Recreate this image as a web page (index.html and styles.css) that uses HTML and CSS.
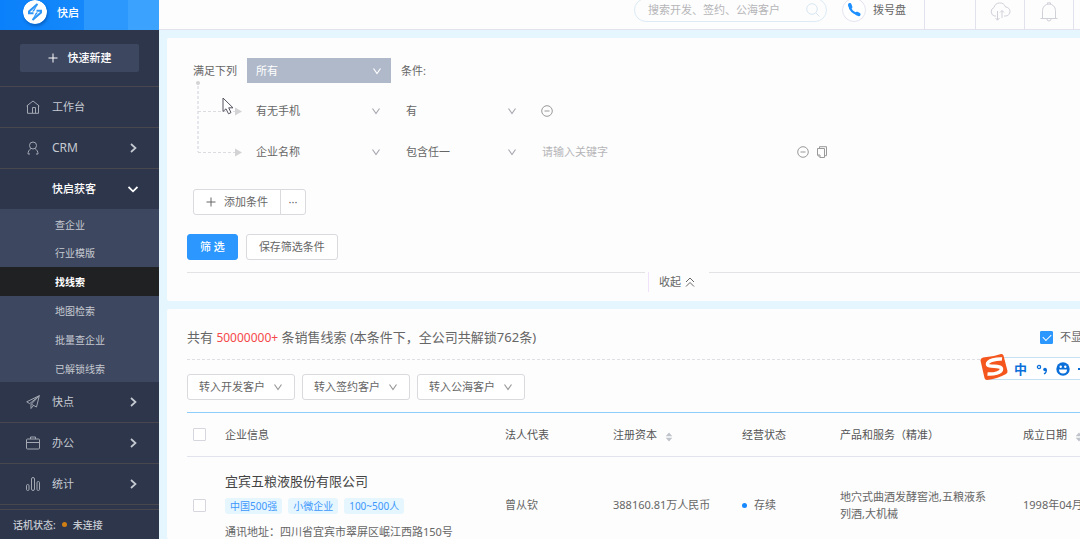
FILE: index.html
```html
<!DOCTYPE html>
<html lang="zh-CN">
<head>
<meta charset="utf-8">
<title>快启</title>
<link rel="stylesheet" href="styles.css">
</head>
<body>
<svg class="defs" aria-hidden="true">
  <symbol id="down" viewBox="0 0 10 10"><path d="M1.500 2.500 5 7.500 8.500 2.500" fill="none" stroke="currentColor" stroke-width="1.200"/></symbol>
  <symbol id="right" viewBox="0 0 10 10"><path d="M3 1 7.500 5 3 9" fill="none" stroke="currentColor" stroke-width="1.700"/></symbol>
  <symbol id="plus" viewBox="0 0 10 10"><path d="M5 .5v9M.5 5h9" fill="none" stroke="currentColor"/></symbol>
  <symbol id="minus" viewBox="0 0 12 12"><circle cx="6" cy="6" r="5.300" fill="none" stroke="currentColor"/><path d="M3.500 6h5" stroke="currentColor"/></symbol>
  <symbol id="sort" viewBox="0 0 8 10"><path d="M4 .5 7.300 4.300H.7zM4 9.500.7 5.700h6.600z" fill="currentColor"/></symbol>
</svg>
<div class="app">
  <aside class="sidebar">
    <div class="brand">
      <svg class="logo" viewBox="0 0 24 24"><circle cx="12" cy="12" r="12" fill="#fff"/><path d="M14.500 4 6 11.500v1.700h4.500M9.500 20 18 12.500v-1.700h-4.500" fill="none" stroke="#2c95f5" stroke-width="2"/><path d="M15.500 3 11 11.500h-2zM8.500 21l4.500-8.500h2z" fill="#2c95f5"/></svg>
      <span>快启</span>
    </div>
    <div class="create"><button class="create-btn"><svg class="i10"><use href="#plus"/></svg>快速新建</button></div>
    <nav class="menu">
      <a class="item" href="#"><svg class="i14" viewBox="0 0 14 14"><path d="M.7 6 7 1l6.300 5M1.500 5v8.300h11V5M6.500 13V7.500H9.500V13" fill="none" stroke="currentColor"/></svg><span>工作台</span></a>
      <a class="item" href="#"><svg class="i14" viewBox="0 0 14 14"><circle cx="7" cy="4.500" r="3.500" fill="none" stroke="currentColor"/><path d="M5 7.500C3 9 2 10.500 2 13h2M9 7.500c2 1.500 3 3 3 5.500h-2" fill="none" stroke="currentColor"/></svg><span class="latin">CRM</span><svg class="i10"><use href="#right"/></svg></a>
      <a class="item open" href="#"><span class="i14"></span><span>快启获客</span><svg class="i10" viewBox="0 0 10 10"><path d="M.5 3 5 7.300 9.500 3" fill="none" stroke="currentColor" stroke-width="1.800"/></svg></a>
      <div class="submenu">
        <a href="#">查企业</a>
        <a href="#">行业模版</a>
        <a class="active" href="#">找线索</a>
        <a href="#">地图检索</a>
        <a href="#">批量查企业</a>
        <a href="#">已解锁线索</a>
      </div>
      <a class="item" href="#"><svg class="i14" viewBox="0 0 14 14"><path d="M13.300.7.7 6.800l3 1.800zM13.300.7 5 9.500v4l2.300-2.800M13.300.7 10.500 12 5.500 9.300" fill="none" stroke="currentColor" stroke-linejoin="round"/></svg><span>快点</span><svg class="i10"><use href="#right"/></svg></a>
      <a class="item" href="#"><svg class="i14" viewBox="0 0 14 14"><rect x=".5" y="3" width="13" height="10" rx="1" fill="none" stroke="currentColor"/><path d="M4.500 3V1h5v2M.5 6.500h13" fill="none" stroke="currentColor"/></svg><span>办公</span><svg class="i10"><use href="#right"/></svg></a>
      <a class="item" href="#"><svg class="i14" viewBox="0 0 14 14"><g fill="none" stroke="currentColor"><rect x=".5" y="7.500" width="2.500" height="6" rx="1.200"/><rect x="5.500" y=".5" width="3" height="13" rx="1.500"/><rect x="11" y="4.500" width="2.500" height="9" rx="1.200"/></g></svg><span>统计</span><svg class="i10"><use href="#right"/></svg></a>
    </nav>
    <div class="phone-state"><span>话机状态:</span><i></i><span>未连接</span></div>
  </aside>

  <main class="main">
    <header class="topbar">
      <label class="search"><input type="text" placeholder="搜索开发、签约、公海客户" aria-label="搜索"><svg viewBox="0 0 14 14"><circle cx="6" cy="6" r="5.300" fill="none" stroke="currentColor"/><path d="m10 10 3.500 3.500" stroke="currentColor"/></svg></label>
      <button class="dial"><svg viewBox="0 0 24 24"><circle cx="12" cy="12" r="11.500" fill="#fff" stroke="#e3e3f2"/><path d="M7.500 7C7.500 11.500 11.500 16 16.500 16" fill="none" stroke="#1e90ff" stroke-width="2.200"/><path d="M7.800 6.800l.8 2.200M14.800 15.500l2 .8" stroke="#1e90ff" stroke-width="3.600" stroke-linecap="round"/></svg>拨号盘</button>
      <div class="tool wide"></div>
      <button class="tool" aria-label="同步"><svg viewBox="0 0 22 20"><path d="M7 14H5.500a4.500 4.500 0 0 1-.5-8.500A6 6 0 0 1 16.500 5a4.500 4.500 0 0 1 0 9H15M8.500 9v9M6.500 16l2 2.200 2-2.200M13 16V8.500M11 10.500l2-2 2 2" fill="none" stroke="currentColor"/></svg></button>
      <button class="tool" aria-label="通知"><svg viewBox="0 0 22 20"><path d="M2.500 16.500h17M4.500 16.500V8.500a6.500 6.500 0 0 1 13 0v8M9.500 2V.8h3V2M9 17a2 2 0 0 0 4 0" fill="none" stroke="currentColor"/></svg></button>
      <div class="tool edge"></div>
    </header>

    <section class="panel filter">
      <div class="match">
        <label for="mode">满足下列</label>
        <span class="pick mode"><select id="mode"><option>所有</option></select><svg class="i10"><use href="#down"/></svg></span>
        <span>条件:</span>
      </div>
      <div class="rules">
        <svg class="tree" viewBox="0 0 50 81"><circle cx="5" cy="0" r="2" fill="#d3d3d6"/><path d="M5 3v66" stroke="#dedee8" stroke-width="1.500" stroke-dasharray="3 2"/><path d="M5 28.500h37M5 69.500h37" stroke="#dcdce0" stroke-dasharray="3 2"/><path d="m42 24.500 7 4-7 4zM42 65.500l7 4-7 4z" fill="#d3d3d6"/></svg>
        <div class="rule-list">
          <div class="rule">
            <span class="pick field"><select aria-label="字段"><option>有无手机</option></select><svg class="i10"><use href="#down"/></svg></span>
            <span class="pick op"><select aria-label="条件"><option>有</option></select><svg class="i10"><use href="#down"/></svg></span>
            <button class="icon" aria-label="删除"><svg class="i12"><use href="#minus"/></svg></button>
          </div>
          <div class="rule">
            <span class="pick field"><select aria-label="字段"><option>企业名称</option></select><svg class="i10"><use href="#down"/></svg></span>
            <span class="pick op"><select aria-label="条件"><option>包含任一</option></select><svg class="i10"><use href="#down"/></svg></span>
            <input class="keyword" type="text" placeholder="请输入关键字" aria-label="关键字">
            <button class="icon" aria-label="删除"><svg class="i12"><use href="#minus"/></svg></button>
            <button class="icon" aria-label="复制"><svg class="i12" viewBox="0 0 12 12"><path d="M3.500 2V.7h7v9H9M1.500 2.500h7v9H4L1.500 9zM1.500 9H4v2.500" fill="none" stroke="currentColor"/></svg></button>
          </div>
        </div>
      </div>
      <div class="add-group"><button class="btn"><svg class="i10"><use href="#plus"/></svg>添加条件</button><button class="btn more" aria-label="更多">···</button></div>
      <div class="actions"><button class="btn primary">筛 选</button><button class="btn">保存筛选条件</button></div>
      <div class="fold"><button>收起<svg class="i10" viewBox="0 0 10 10"><path d="M1 5 5 1l4 4M1 9.500l4-4 4 4" fill="none" stroke="currentColor"/></svg></button></div>
    </section>

    <section class="panel results">
      <div class="summary"><p>共有 <em>50000000+</em> 条销售线索 (本条件下，全公司共解锁762条)</p><label><input type="checkbox" checked>不显</label></div>
      <div class="bulk">
        <button class="btn">转入开发客户<svg class="i10"><use href="#down"/></svg></button>
        <button class="btn">转入签约客户<svg class="i10"><use href="#down"/></svg></button>
        <button class="btn">转入公海客户<svg class="i10"><use href="#down"/></svg></button>
      </div>
      <table>
        <colgroup><col class="c-check"><col class="c-info"><col class="c-person"><col class="c-capital"><col class="c-state"><col class="c-product"><col></colgroup>
        <thead><tr><th><input type="checkbox" aria-label="全选"></th><th>企业信息</th><th>法人代表</th><th>注册资本<svg class="sort"><use href="#sort"/></svg></th><th>经营状态</th><th>产品和服务（精准）</th><th>成立日期<svg class="sort"><use href="#sort"/></svg></th></tr></thead>
        <tbody><tr>
          <td><input type="checkbox" aria-label="选择"></td>
          <td><a class="company" href="#">宜宾五粮液股份有限公司</a><div class="tags"><span>中国500强</span><span>小微企业</span><span>100~500人</span></div><div class="address">通讯地址：四川省宜宾市翠屏区岷江西路150号</div></td>
          <td>曾从钦</td><td>388160.81万人民币</td><td><i class="dot"></i>存续</td><td class="product">地穴式曲酒发酵窖池,五粮液系列酒,大机械</td><td>1998年04月</td>
        </tr></tbody>
      </table>
    </section>
  </main>
</div>

<div class="ime">
  <svg class="ime-logo" viewBox="0 0 28 28"><path d="M3 4.500Q13 4 21 1q2-.3 2.500 1.500L27.500 18q.3 2-1.500 3Q17 26 7 27q-2 0-2.500-2L.5 7.500q-.2-2 2.500-3z" fill="#f4561d"/><path d="M22 6C17 5.500 7.500 7.500 7.500 11c0 4 14 .5 14 5 0 4-8 5.500-14 5" fill="none" stroke="#fff" stroke-width="3.500"/></svg>
  <b>中</b>
  <svg class="ime-punct" viewBox="0 0 12 12"><circle cx="3" cy="4" r="1.600" fill="none" stroke="currentColor" stroke-width="1.300"/><circle cx="9" cy="6.500" r="1.800" fill="currentColor"/><path d="M10.300 6.500q.4 3-2.300 4.500" fill="none" stroke="currentColor" stroke-width="1.300"/></svg>
  <svg class="ime-face" viewBox="0 0 14 14"><circle cx="7" cy="7" r="6.700" fill="currentColor"/><circle cx="4.700" cy="4.800" r="1.200" fill="#fff"/><circle cx="9.300" cy="4.800" r="1.200" fill="#fff"/><path d="M3 7.500h8a4 4 0 0 1-8 0z" fill="#fff"/></svg>
  <i></i>
</div>
<svg class="cursor" viewBox="0 0 12 18"><path d="M1 1v13.500l3-2.700 2.500 5 2.500-1.200-2.300-4.800H11z" fill="#fff" stroke="#55525e"/></svg>
</body>
</html>
```
FILE: styles.css
```css
* { box-sizing: border-box; }

body {
  margin: 0;
  height: 100vh;
  overflow: hidden;
  font: 11px/16px "Noto Sans", "Noto Sans CJK SC", sans-serif;
  color: #666;
}

a { color: inherit; text-decoration: none; }

button, input, select {
  font: inherit;
  color: inherit;
  margin: 0;
  padding: 0;
  border: 0;
  background: none;
}

p { margin: 0; }
svg { display: block; flex: none; }
.defs { position: absolute; width: 0; height: 0; }
.i10 { width: 10px; height: 10px; flex: none; }
.i12 { width: 12px; height: 12px; }
.i14 { width: 14px; height: 14px; flex: none; }

input[type="checkbox"] {
  appearance: none;
  display: block;
  flex: none;
  width: 13px;
  height: 13px;
  border: 1px solid #d6d6df;
  border-radius: 1px;
  background: #fff;
}

input[type="checkbox"]:checked {
  border-color: #2b97ff;
  background: #2b97ff;
  display: grid;
  place-items: center;
}

input[type="checkbox"]:checked::after {
  content: "";
  width: 7px;
  height: 4px;
  margin-bottom: 2px;
  border: solid #fff;
  border-width: 0 0 1px 1px;
  transform: rotate(-45deg);
}

.app { display: flex; height: 100%; }

/* Sidebar */
.sidebar {
  width: 159px;
  flex: none;
  display: flex;
  flex-direction: column;
  background: #2d364a;
  color: #c6cad2;
}

.brand {
  height: 30px;
  flex: none;
  display: flex;
  align-items: flex-start;
  gap: 10px;
  padding-left: 23px;
  background: linear-gradient(90deg, #0a80fa 0, #1589fb 84px, #2c97fc 84px 128px, #3ba2fd 128px);
  color: #fff;
  font-weight: 500;
  line-height: 26px;
}

.logo { width: 24px; height: 24px; border-radius: 50%; box-shadow: 1px 2px 3px #0a62c4; }

.create { padding: 14px 20px; border-bottom: 1px solid #48474e; }

.create-btn {
  width: 100%;
  height: 28px;
  display: flex;
  align-items: center;
  justify-content: center;
  gap: 10px;
  border-radius: 2px;
  background: #3d475f;
  color: #fff;
  font-weight: 500;
}

.item {
  display: flex;
  align-items: center;
  gap: 12px;
  height: 41px;
  padding: 0 21px 0 26px;
  border-bottom: 1px solid #48474e;
}

.item > .i14 { color: #a3a8b3; }
.item > :nth-child(2) { flex: 1; }
.item .latin { font-size: 12px; }
.item.open { border-bottom-color: #3d475f; color: #fff; font-weight: 500; }

.submenu { background: #3d475f; font-size: 10px; }
.submenu a { display: block; height: 29px; padding: 1px 0 0 55px; line-height: 29px; }
.submenu a:first-child, .submenu a:last-child { height: 28px; }
.submenu .active { background: #202123; color: #fff; font-weight: 700; }

.phone-state {
  flex: 1;
  display: flex;
  align-items: center;
  gap: 6px;
  margin-top: 4px;
  padding-left: 13px;
  border-top: 1px solid #48474e;
  font-size: 10px;
  font-weight: 500;
}

.phone-state i { width: 5px; height: 5px; border-radius: 50%; background: #cf7f14; }

/* Top bar */
.main {
  flex: 1;
  min-width: 0;
  display: flex;
  flex-direction: column;
  overflow: hidden;
  background: #e6f6fe;
}

.topbar {
  height: 39px;
  margin-top: -9px;
  flex: none;
  display: flex;
  align-items: center;
  justify-content: flex-end;
  border-bottom: 1px solid #e2e2ee;
  background: #fdfdfd;
}

.search {
  width: 193px;
  height: 24px;
  display: flex;
  align-items: center;
  padding: 0 6px 0 13px;
  border: 1px solid #dcebf6;
  border-radius: 12px;
  color: #d7e6f2;
}

.search input { flex: 1; min-width: 0; color: #888; }
.search svg { width: 14px; height: 14px; }
::placeholder { color: #b5b5b8; opacity: 1; }

.dial { display: flex; align-items: center; gap: 7px; margin: 0 18px 0 15px; }
.dial svg { width: 24px; height: 24px; }

.tool {
  align-self: stretch;
  width: 49px;
  display: flex;
  align-items: center;
  justify-content: center;
  padding-top: 4px;
  border-left: 1px solid #e2e2ee;
  color: #d0d0d9;
}

.tool svg { width: 22px; height: 20px; }
.tool.wide { width: 51px; }
.tool.edge { width: 7px; }

/* Panels */
.panel { background: #fdfdfd; margin: 8px 0 0 8px; border-radius: 2px 0 0 2px; }
.filter { padding: 20px 0 9px 20px; }
.match { display: flex; align-items: center; gap: 10px; padding-left: 6px; }

.pick { display: grid; align-items: center; height: 25px; }
.pick select, .pick svg { grid-area: 1 / 1; }
.pick select { appearance: none; width: 100%; height: 25px; padding-left: 9px; outline: 0; }
.pick svg { justify-self: end; pointer-events: none; color: #a9a9b3; }
.mode { width: 144px; background: #b0b9c9; color: #fff; }
.mode svg { margin-right: 9px; color: #fff; }

.rules { display: flex; padding-left: 6px; }
.tree { width: 50px; height: 81px; overflow: visible; }
.rule-list { display: flex; flex-direction: column; gap: 16px; padding: 15px 0 0 4px; }
.rule { display: flex; align-items: center; height: 25px; }
.field { width: 139px; }
.field svg { margin-right: 5px; }
.op { width: 142px; margin-left: 11px; }
.op svg { margin-right: 22px; }
.rule .icon { margin-left: 2px; color: #999; }
.keyword { width: 248px; padding-left: 3px; }
.rule .keyword + .icon { margin-left: 10px; }
.rule .icon + .icon { margin-left: 7px; }

.btn {
  display: flex;
  align-items: center;
  gap: 8px;
  height: 26px;
  padding: 0 12px;
  border: 1px solid #d9d9de;
  border-radius: 3px;
  background: #fff;
}

.add-group { display: flex; padding: 25px 0 0 6px; }
.add-group .btn:first-child { border-radius: 3px 0 0 3px; }
.add-group .more { width: 26px; margin-left: -1px; padding: 0; justify-content: center; border-radius: 0 3px 3px 0; }

.actions { display: flex; gap: 8px; padding-top: 19px; }
.primary { border-color: #2b97ff; background: #2b97ff; color: #fff; font-weight: 500; }

.fold { display: flex; align-items: flex-start; margin-top: 12px; }
.fold::before, .fold::after { content: ""; height: 1px; background: #e3e3e6; }
.fold::before { width: 458px; }
.fold::after { flex: 1; }
.fold button {
  width: 57px;
  height: 20px;
  display: flex;
  align-items: center;
  gap: 4px;
  margin: 0 4px 0 3px;
  padding-left: 10px;
  border-left: 1px solid #f0e2fa;
}

/* Results */
.results { flex: 1; padding-left: 20px; overflow: hidden; }

.summary {
  display: flex;
  align-items: center;
  justify-content: space-between;
  height: 51px;
  padding-top: 6px;
  border-bottom: 1px dashed #dedee3;
  font-size: 13px;
}

.summary p { padding-top: 1px; }
.summary em { font-style: normal; font-size: 12px; color: #f5484a; }
.summary label { display: flex; align-items: center; gap: 7px; width: 40px; white-space: nowrap; font-size: 11px; }
.bulk { display: flex; gap: 7px; padding: 14px 0 12px; }
.bulk .btn { padding: 0 11px; }
.bulk svg { color: #999; }

table {
  width: 100%;
  min-width: 906px;
  table-layout: fixed;
  border-collapse: separate;
  border-spacing: 0;
  border-top: 1px solid #8fcdfa;
}

.c-check { width: 38px; }
.c-info { width: 280px; }
.c-person { width: 108px; }
.c-capital { width: 129px; }
.c-state { width: 98px; }
.c-product { width: 183px; }

th, td { padding: 0; text-align: left; white-space: nowrap; }
th { height: 44px; border-bottom: 1px solid #e1e3ee; font-weight: 400; color: #555; }
th:first-child, td:first-child { padding-left: 6px; }
td { height: 96px; }
.sort { display: inline-block; width: 8px; height: 10px; margin-left: 8px; vertical-align: -3px; color: #bfc3cb; }
.product { white-space: normal; padding-right: 32px; line-height: 17px; }
.company { display: block; font-size: 13px; line-height: 20px; color: #444; }
.tags { display: flex; gap: 6px; margin: 7px 0 10px; font-size: 10px; color: #3d97fc; }
.tags span { padding: 0 5px; border-radius: 3px; background: #e6f6fe; }
.dot { display: inline-block; width: 5px; height: 5px; margin-right: 7px; border-radius: 50%; background: #1789ff; vertical-align: 1px; }

/* Input method bar and pointer float over the page */
.ime {
  position: fixed;
  right: 0;
  top: 357px;
  width: 94px;
  height: 23px;
  display: flex;
  align-items: center;
  border: solid #c5dff3;
  border-width: 1px 0;
  background: #fff;
  color: #0b6fda;
}

.ime-logo { width: 28px; height: 28px; margin: 0 6px 4px -6px; }
.ime b { font-size: 13px; }
.ime-punct { width: 12px; height: 12px; margin: 0 8px 0 9px; }
.ime-face { width: 14px; height: 14px; }
.ime i { width: 2px; height: 2px; margin-left: 8px; background: currentColor; }

.cursor { position: fixed; left: 222px; top: 97px; width: 12px; height: 18px; }
```
